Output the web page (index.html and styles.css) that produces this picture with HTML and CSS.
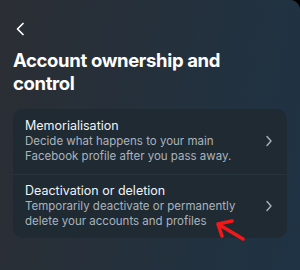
FILE: index.html
```html
<!DOCTYPE html>
<html>
<head lang="en">
    <meta charset="UTF-8">
    <title>Account ownership and control</title>
    <link rel="stylesheet" href="styles.css">
</head>
<body>
<div class="screen">
    <div class="top-bar">
        <a class="back-btn" href="javascript:void(0);">
            <svg width="10" height="14" viewBox="0 0 10 14"><path d="M8 1.5 L2.5 7 L8 12.5" fill="none" stroke="#fff" stroke-width="1.7" stroke-linecap="round" stroke-linejoin="round"/></svg>
        </a>
    </div>
    <h1 class="page-title">Account ownership and control</h1>
    <div class="menu-card">
        <div class="menu-item">
            <div class="menu-text">
                <div class="menu-title">Memorialisation</div>
                <div class="menu-desc">Decide what happens to your main Facebook profile after you pass away.</div>
            </div>
            <svg class="chevron" width="8" height="12" viewBox="0 0 8 12"><path d="M2 1.5 L6 6 L2 10.5" fill="none" stroke="#a8b3bd" stroke-width="1.4" stroke-linecap="round" stroke-linejoin="round"/></svg>
        </div>
        <div class="menu-item">
            <div class="menu-text">
                <div class="menu-title">Deactivation or deletion</div>
                <div class="menu-desc">Temporarily deactivate or permanently delete your accounts and profiles</div>
            </div>
            <svg class="chevron" width="8" height="12" viewBox="0 0 8 12"><path d="M2 1.5 L6 6 L2 10.5" fill="none" stroke="#a8b3bd" stroke-width="1.4" stroke-linecap="round" stroke-linejoin="round"/></svg>
            <svg class="red-arrow" width="40" height="30" viewBox="0 0 40 30"><path d="M33 24 L8 9 M8 9 L22 6 M8 9 L12 21" fill="none" stroke="#f01818" stroke-width="3.6" stroke-linecap="round" stroke-linejoin="round"/></svg>
        </div>
    </div>
    <div class="corner"></div>
</div>
</body>
</html>
```

FILE: styles.css
```css
* {
    box-sizing: border-box;
}
body {
    margin: 0px;
    padding: 0px;
}
a {
    text-decoration: none;
}
.screen {
    width: 300px;
    height: 270px;
    position: relative;
    overflow: hidden;
    padding: 0px 13px;
    background: linear-gradient(100deg, #2b2e34 0%, #25303b 45%, #1f3344 100%);
    font-family: Inter, "Noto Sans", sans-serif;
    color: #ffffff;
}
.top-bar {
    height: 49px;
    padding-top: 20px;
}
.back-btn {
    display: block;
    width: 14px;
    height: 14px;
    padding-left: 2px;
}
.page-title {
    margin: 0px;
    font-size: 18.5px;
    font-weight: 700;
    line-height: 23px;
    letter-spacing: -0.35px;
    width: 250px;
}
.menu-card {
    margin-top: 14px;
    background: #1f2a33;
    border-radius: 10px;
}
.menu-item {
    position: relative;
    display: flex;
    align-items: center;
    padding: 9px 12px 10px 12px;
    border-bottom: 1px solid #28343d;
}
.menu-item:last-child {
    border-bottom: none;
    padding-top: 8px;
    padding-bottom: 9px;
}
.menu-text {
    flex: 1;
}
.menu-title {
    font-size: 12.5px;
    line-height: 16px;
    color: #f2f4f6;
}
.menu-desc {
    font-size: 11.5px;
    line-height: 15px;
    color: #aab4bd;
    width: 228px;
}
.chevron {
    margin-left: 8px;
    margin-right: 2px;
}
.red-arrow {
    position: absolute;
    left: 197px;
    top: 40px;
}
.corner {
    position: absolute;
    right: 0px;
    top: 0px;
    width: 10px;
    height: 10px;
    background: radial-gradient(circle at 0% 100%, transparent 9.5px, #000000 10.5px);
}
```
